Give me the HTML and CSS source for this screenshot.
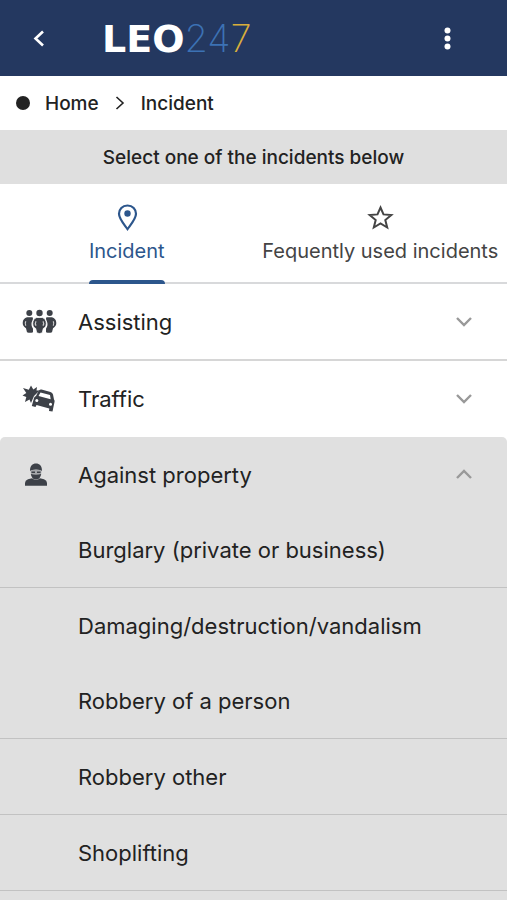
FILE: index.html
```html
<!DOCTYPE html>
<html lang="en">
<head>
<meta charset="utf-8">
<meta name="viewport" content="width=device-width, initial-scale=1">
<title>LEO247 – Incident</title>
<link rel="stylesheet" href="styles.css">
</head>
<body>
<header class="topbar">
  <button class="icon-button" type="button" aria-label="Back">
    <svg width="24" height="24" viewBox="0 0 24 24" fill="none" stroke="currentColor" stroke-width="2.600"><path d="M17 5.500 9.500 12.500 17 19.500"/></svg>
  </button>
  <a class="logo" href="#"><span class="logo-leo">LEO</span><span class="logo-24">24</span><span class="logo-7">7</span></a>
  <button class="icon-button" type="button" aria-label="More options">
    <svg width="24" height="24" viewBox="0 0 24 24" fill="currentColor"><circle cx="12.500" cy="4.500" r="3"/><circle cx="12.500" cy="12.500" r="3"/><circle cx="12.500" cy="20.500" r="3"/></svg>
  </button>
</header>
<nav class="breadcrumb" aria-label="Breadcrumb">
  <span class="dot"></span>
  <a href="#">Home</a>
  <svg width="12" height="16" viewBox="0 0 12 16" fill="none" stroke="currentColor" stroke-width="1.600"><path d="M2.500 2 9 8 2.500 14"/></svg>
  <a href="#" aria-current="page">Incident</a>
</nav>
<p class="banner">Select one of the incidents below</p>
<div class="tabs" role="tablist">
  <button class="tab tab-active" type="button" role="tab" aria-selected="true">
    <svg width="28" height="28" viewBox="0 0 28 28"><path d="M14.500 2.500C9.300 2.500 6 6.200 6 10.800c0 5 4.800 10.200 8.500 15.300 3.700-5.100 8.500-10.300 8.500-15.300C23 6.200 19.700 2.500 14.500 2.500z" fill="none" stroke="currentColor" stroke-width="2.200"/><circle cx="14.500" cy="10.500" r="3.200" fill="currentColor"/></svg>
    <span>Incident</span>
  </button>
  <button class="tab" type="button" role="tab" aria-selected="false">
    <svg width="28" height="28" viewBox="0 0 28 28" fill="none" stroke="currentColor" stroke-width="2"><path d="M14.500 4.500 17.500 11.400 25.300 12 19.300 17 21.200 24.500 14.500 20.500 7.800 24.500 9.700 17 3.700 12 11.500 11.400z"/></svg>
    <span>Fequently used incidents</span>
  </button>
</div>
<main class="accordion">
  <button class="row row-line" type="button" aria-expanded="false">
    <svg class="row-icon" width="36" height="28" viewBox="0 0 36 28" fill="currentColor">
      <circle cx="7.300" cy="5" r="3"/><circle cx="17.500" cy="5" r="3.200"/><circle cx="27.700" cy="5" r="3"/>
      <path d="M5 9.300h5.500c1.500 2-1 4-1 6.700s1 3.500 1.500 4.700v3.500q-3 1.300-6 0l-1-4C1.500 18.500.700 17 .7 15c0-3 1.800-5.200 4.300-5.700z"/>
      <path d="M30 9.300h-5.500c-1.500 2 1 4 1 6.700s-1 3.500-1.500 4.700v3.500q3 1.300 6 0l1-4c2.500-1.700 3.300-3.200 3.300-5.200 0-3-1.800-5.200-4.300-5.700z"/>
      <path d="M14.700 9.500h5.600c2.500.5 4 3.300 4 6s-1.300 4.200-3 5l-1 4.300q-2.800 1.600-5.600 0l-1-4.300c-1.700-.8-3-2.300-3-5s1.500-5.500 4-6z" stroke="#fff" stroke-width=".8"/>
      <path d="M3.800 13.300q-1.200 2.200 0 4.400M31.200 13.300q1.200 2.200 0 4.400M14 13.300q-1.300 2.200 0 4.400M21 13.300q1.300 2.200 0 4.400" fill="none" stroke="#ccc" stroke-width="1.200"/>
    </svg>
    <span class="row-label">Assisting</span>
    <svg class="chevron" width="16" height="16" viewBox="0 0 16 16"><path d="M1 4 8 11 15 4"/></svg>
  </button>
  <button class="row" type="button" aria-expanded="false">
    <svg class="row-icon" width="36" height="28" viewBox="0 0 36 28" fill="currentColor">
      <path d="M9 .5 11.300 4.500 15 2 14.500 5.500 17.500 5.500 12 11 9 18 7.500 14.500 3 17 4.300 12 .5 10.500 4.300 8 1 3 6.800 4.800z"/>
      <path fill-rule="evenodd" d="M16.500 6Q17.500 4 19.500 4.500L28.500 7Q30.500 7.600 31 9.500L32 14.500Q33 15.500 32.500 17L30.500 26.500 27 26 27.300 23.500 14.500 20 13.500 22 9.800 21 12 13Q12.500 11.500 14 11zM18.500 7.500 16.500 11 28.700 14.300 28 10z"/>
      <g fill="#fff"><circle cx="14.800" cy="15.500" r="1.500"/><circle cx="28.500" cy="19.300" r="1.500"/></g>
    </svg>
    <span class="row-label">Traffic</span>
    <svg class="chevron" width="16" height="16" viewBox="0 0 16 16"><path d="M1 4 8 11 15 4"/></svg>
  </button>
  <section class="group">
    <button class="row" type="button" aria-expanded="true">
      <svg class="row-icon" width="36" height="28" viewBox="0 0 36 28" fill="currentColor">
        <path d="M8 10C8 4.500 10.500 2.500 14 2.500S20 4.500 20 10Q14 7.500 8 10z"/>
        <path d="M8.500 9.500Q14 7.500 19.500 9.500L19 14Q14 16 9 14z" fill="#a6a8ab"/>
        <path d="M9.500 10.500h3.500v1.500h-3.500zM15 10.500h3.500v1.500H15zM8.800 13q5.200 1.500 10.400 0-1 5.500-5.200 5.500T8.800 13z"/>
        <path d="M3 24.700V22Q3 19.500 6 18.300L10 17.200Q14 20.500 18 17.200L22 18.300Q25 19.500 25 22v2.700z"/>
      </svg>
      <span class="row-label">Against property</span>
      <svg class="chevron" width="16" height="16" viewBox="0 0 16 16"><path d="M1 11 8 4 15 11"/></svg>
    </button>
    <ul class="items">
      <li class="item-line"><a href="#">Burglary (private or business)</a></li>
      <li><a href="#">Damaging/destruction/vandalism</a></li>
      <li class="item-line"><a href="#">Robbery of a person</a></li>
      <li class="item-line"><a href="#">Robbery other</a></li>
      <li class="item-line"><a href="#">Shoplifting</a></li>
    </ul>
  </section>
</main>
</body>
</html>
```
FILE: styles.css
```css
* {
  box-sizing: border-box;
}

body {
  margin: 0;
  min-height: 100vh;
  display: flex;
  flex-direction: column;
  background: #fff;
  color: #222;
  font-family: Inter, "Liberation Sans", sans-serif;
}

button {
  margin: 0;
  padding: 0;
  border: 0;
  background: none;
  color: inherit;
  font: inherit;
  cursor: pointer;
}

a {
  color: inherit;
  text-decoration: none;
}

.topbar {
  display: flex;
  align-items: center;
  height: 76px;
  padding: 0 48px 0 26px;
  background: #243860;
  color: #fff;
}

.icon-button {
  display: flex;
}

.logo {
  flex: 1;
  display: flex;
  align-items: baseline;
  padding-left: 52px;
  font-size: 38px;
  line-height: 40px;
}

.logo-leo {
  font-family: "DejaVu Sans", sans-serif;
  font-weight: 700;
}

.logo-24 {
  color: #3c72b4;
  font-weight: 200;
}

.logo-7 {
  color: #d9ae3c;
  font-weight: 200;
}

.breadcrumb {
  display: flex;
  align-items: center;
  gap: 15px;
  height: 54px;
  padding: 0 16px;
  font-size: 19px;
  font-weight: 500;
}

.dot {
  width: 14px;
  height: 14px;
  border-radius: 50%;
  background: #222;
}

.banner {
  margin: 0;
  padding: 16px 16px 14px;
  background: #dfdfdf;
  font-size: 19px;
  line-height: 24px;
  font-weight: 500;
  text-align: center;
}

.tabs {
  display: grid;
  grid-template-columns: 1fr 1fr;
  height: 100px;
  border-bottom: 2px solid #d8d9db;
}

.tab {
  display: flex;
  flex-direction: column;
  align-items: center;
  padding-top: 19px;
  color: #444;
  font-size: 20px;
  line-height: 24px;
  white-space: nowrap;
}

.tab span {
  padding: 8px 0 19px;
}

.tab-active {
  color: #2c568c;
}

.tab-active span {
  position: relative;
}

.tab-active span::after {
  content: "";
  position: absolute;
  left: 0;
  right: 0;
  bottom: -2px;
  height: 4px;
  border-radius: 4px 4px 0 0;
  background: #2c568c;
}

.accordion {
  flex: 1;
  display: flex;
  flex-direction: column;
}

.row {
  display: flex;
  align-items: center;
  width: 100%;
  min-height: 75px;
  padding: 0 35px 0 22px;
  text-align: left;
}

.row-line {
  min-height: 77px;
  border-bottom: 2px solid #d6d6d6;
}

.row-icon {
  color: #3d4148;
}

.row-label {
  flex: 1;
  padding-left: 20px;
  font-size: 22px;
  line-height: 28px;
}

.chevron {
  fill: none;
  stroke: #999;
  stroke-width: 2.4;
}

.group {
  flex: 1;
  margin-top: 1px;
  border-radius: 5px 5px 0 0;
  background: #e0e0e0;
}

.items {
  margin: 0;
  padding: 0;
  list-style: none;
}

.items a {
  display: flex;
  align-items: center;
  min-height: 75px;
  padding: 0 24px 0 78px;
  font-size: 22px;
  line-height: 28px;
}

.item-line {
  border-bottom: 1px solid #c2c2c2;
}
```
